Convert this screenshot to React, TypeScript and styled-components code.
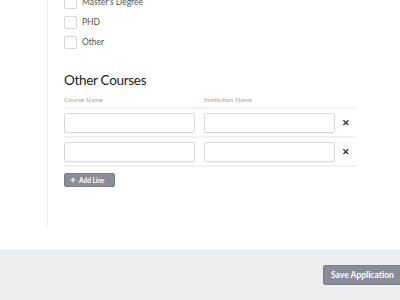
import styled, { createGlobalStyle } from "styled-components";

const Global = createGlobalStyle`
  html, body {
    margin: 0;
    padding: 0;
    background: #ffffff;
    font-family: "Lato", "Noto Sans", sans-serif;
    overflow: hidden;
  }
`;

const Screen = styled.div`
  width: 400px;
  height: 300px;
  display: flex;
  flex-direction: column;
`;

const Main = styled.div`
  height: 249px;
  background: #fff;
  padding-left: 47px;
  box-sizing: border-box;
`;

const Panel = styled.div`
  height: 232px;
  border-left: 1.5px solid #eeeff1;
  padding-left: 16px;
  box-sizing: border-box;
`;

const Checks = styled.ul`
  list-style: none;
  margin: -4px 0 0;
  padding: 0;
  display: flex;
  flex-direction: column;
  gap: 8px;
`;

const Check = styled.li`
  display: flex;
  align-items: center;
  gap: 5px;
  height: 12px;
  font-size: 8.5px;
  color: #555;
`;

const Box = styled.span`
  width: 11px;
  height: 11px;
  border: 1px solid #d6d7da;
  border-radius: 2px;
  background: #fff;
`;

const Title = styled.h2`
  margin: 23px 0 0;
  font-size: 13.5px;
  font-weight: 400;
  color: #222;
  line-height: 18px;
  letter-spacing: -0.3px;
`;

const Table = styled.div`
  width: 292px;
  margin-top: 7px;
`;

const Head = styled.div`
  display: grid;
  grid-template-columns: 140px 140px 12px;
  height: 11px;
  border-bottom: 2px solid #f1f2f3;
  font-size: 6.5px;
  color: #a4a6ab;
`;

const Row = styled.div`
  display: grid;
  grid-template-columns: 140px 140px 12px;
  align-items: center;
  height: 27px;
  border-bottom: 2px solid #f1f2f3;
`;

const Input = styled.div`
  width: 131px;
  height: 20px;
  border: 1px solid #d9dadd;
  border-radius: 2px;
  box-sizing: border-box;
  box-shadow: 0 1px 1px rgba(0, 0, 0, 0.04);
`;

const Remove = styled.span`
  font-size: 9px;
  font-weight: 700;
  color: #333;
  line-height: 1;
  margin-left: -2px;
`;

const AddButton = styled.button`
  margin-top: 6px;
  display: flex;
  align-items: center;
  gap: 3px;
  height: 14px;
  width: 51px;
  padding: 0 0 0 5px;
  background: #8a8d98;
  border: 1px solid #7c7f8a;
  border-radius: 2px;
  color: #fff;
  font-family: "Lato", sans-serif;
  font-size: 6.5px;
  font-weight: 700;
  box-sizing: border-box;
`;

const Footer = styled.div`
  flex: 1;
  background: #eceef0;
  display: flex;
  justify-content: flex-end;
  align-items: flex-start;
  padding-top: 16px;
`;

const SaveButton = styled.button`
  width: 80px;
  height: 20px;
  margin-right: -3px;
  background: #8a8d98;
  border: 1px solid #7b7e89;
  border-radius: 2px;
  color: #fff;
  font-family: "Lato", sans-serif;
  font-size: 8.5px;
  font-weight: 700;
  text-align: left;
  padding: 0 0 0 7px;
  box-sizing: border-box;
`;

const rows = [0, 1];

export default function App() {
  return (
    <Screen>
      <Global />
      <Main>
        <Panel>
          <Checks>
            <Check><Box />Master's Degree</Check>
            <Check><Box />PHD</Check>
            <Check><Box />Other</Check>
          </Checks>
          <Title>Other Courses</Title>
          <Table>
            <Head>
              <span>Course Name</span>
              <span>Institution Name</span>
              <span />
            </Head>
            {rows.map((r) => (
              <Row key={r}>
                <Input />
                <Input />
                <Remove>✕</Remove>
              </Row>
            ))}
          </Table>
          <AddButton>
            <svg width="6" height="6" viewBox="0 0 6 6">
              <path d="M3 0.5V5.5M0.5 3H5.5" stroke="#fff" strokeWidth="1.1" />
            </svg>
            Add Line
          </AddButton>
        </Panel>
      </Main>
      <Footer>
        <SaveButton>Save Application</SaveButton>
      </Footer>
    </Screen>
  );
}
